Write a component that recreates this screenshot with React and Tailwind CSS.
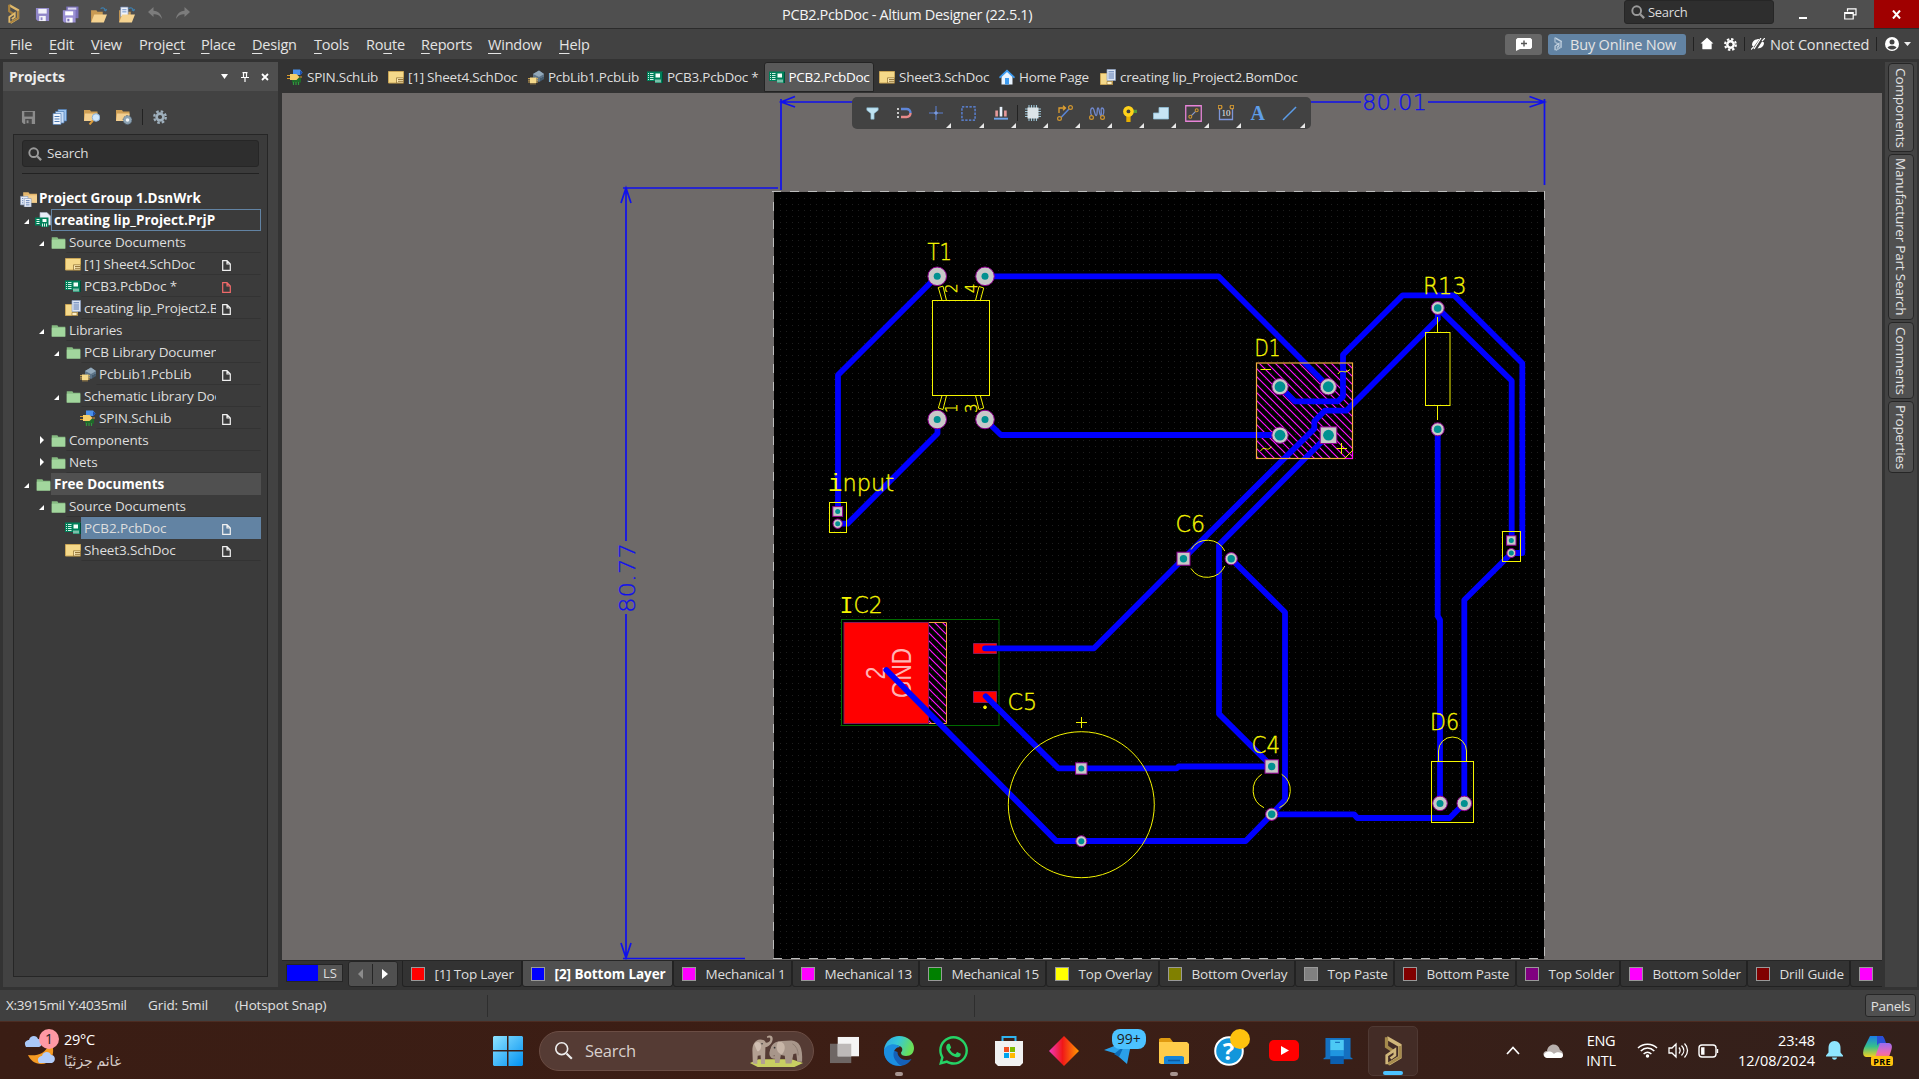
import React from "react";
import { RiHome2Fill } from "react-icons/ri";
import { FaWhatsapp } from "react-icons/fa";

const YELLOW = "#f4f400";

/* ---------- small icons ---------- */
const I = ({ s = 16, w, h, vb = 16, children, className = "" }) => (
  <svg width={w || s} height={h || s} viewBox={`0 0 ${vb} ${vb}`} className={`shrink-0 ${className}`} fill="none" preserveAspectRatio="none">
    {children}
  </svg>
);

const AltiumLogo = ({ w = 16, h = 24, a = "#e0b96a", b = "#a8813c" }) => (
  <svg width={w} height={h} viewBox="0 0 16 24" className="shrink-0" fill="none">
    <path d="M3 1.500 13.500 7.500v9.500L4.500 22.500" stroke={a} strokeWidth="2.800" />
    <path d="M2.800 1v7.500L8 12" stroke={b} strokeWidth="2.600" />
    <path d="M13.500 8v9L4 22.500" stroke={b} strokeWidth="2" />
    <path d="M3 22.500V15.500l6.500-4.500v4.500L6 18" stroke={a} strokeWidth="2.200" />
  </svg>
);

const Floppy = ({ c = "#8f86c8", l = "#f2f2fa", s = 15 }) => (
  <I s={s}>
    <path d="M1 1h14v14H3l-2-2z" fill={c} />
    <path d="M3.500 2h9v5h-9z" fill={l} />
    <path d="M4.500 9.500h7V15h-7z" fill={l} />
    <path d="M6 11h2v3H6z" fill={c} />
  </I>
);
const FloppyAll = () => (
  <I s={17}>
    <path d="M4 .5h11.500v11H4z" fill="#7a70b8" />
    <path d="M5.500 1.500h8v2h-8z" fill="#d8d4f0" />
    <path d="M.8 4h12v11.500H2L.8 14z" fill="#9a90d4" />
    <path d="M3 5h7.500v3.800H3z" fill="#fff" />
    <path d="M4 11h6v4.500H4z" fill="#fff" />
    <path d="M5 12h2v2.500H5z" fill="#7a70b8" />
  </I>
);
const OpenFolder = ({ doc }) => (
  <I s={17}>
    <path d="M1 4h5l1 1.500h5V15H1z" fill="#c99b54" />
    {doc && <path d="M2.500 1h7v9h-7z" fill="#eef2fa" stroke="#6d88b5" strokeWidth=".6" />}
    {doc && <path d="M4 3.500h4M4 5.500h4" stroke="#5b82c0" strokeWidth=".8" />}
    <path d="M4 8h12l-3 7.500H1z" fill="#f5d391" />
    <path d="M10 2.500c2-1.500 4-.5 4.500 1.500M13 3.500l1.700 1L16 3" stroke="#3d7fae" strokeWidth="1" />
  </I>
);
const Arrow = ({ flip }) => (
  <I s={16} className={flip ? "-scale-x-100" : ""}>
    <path d="M1 6 6.500 1v3.800c5 .3 8 3.700 8.500 8.200-2.300-3.800-4.500-4.800-8.500-4.800V11z" fill="#7c7c7c" />
  </I>
);
const Search = ({ s = 14, c = "#9a9a9a", sw = 2.2 }) => (
  <I s={s}>
    <circle cx="6.500" cy="6.500" r="5" stroke={c} strokeWidth={sw} />
    <path d="m10.500 10.500 4.500 4.500" stroke={c} strokeWidth={sw + 0.4} />
  </I>
);
const SchLib = () => (
  <I s={16}>
    <path d="M6 .5h7l2.500 3-2 2.500H6z" fill="#4a8fe8" />
    <path d="M13 1.500l2.500 2-2.500 3z" fill="#1c4fb0" />
    <path d="M5 9h9v4.500H5z" fill="#1f6a2a" />
    <path d="M6.500 13v3M9 13v3M11.500 13v3" stroke="#2e9a3c" strokeWidth="1.200" />
    <path d="M3 5h6.500l3 3-3 3H3z" fill="#f6cf6a" />
    <path d="M0 6.500h3M0 9.500h3M12.500 8h2.500" stroke="#d99a2b" strokeWidth="1.200" />
  </I>
);
const PcbLib = () => (
  <I s={16}>
    <path d="M5 5 11 1.500 16 5v5l-5 3-6-3z" fill="#5d7488" />
    <path d="M5 5l6-3.500L16 5l-5 3z" fill="#93a9ba" />
    <path d="M6 8v3M8 9v3M13 9v3M15 8v3" stroke="#2f4252" />
    <path d="M2 8.500h6.500v5.500H2z" fill="#f5d98a" />
    <path d="M0 9.500h2M0 11.200h2M0 13h2M8.500 9.500H10M8.500 11.200H10M8.500 13H10M3 14v1.500M5 14v1.500M7 14v1.500" stroke="#d8ad55" strokeWidth=".9" />
  </I>
);
const SchDoc = () => (
  <I s={16}>
    <path d="M.5 2.500h15v11.500H.5z" fill="#f5d98a" stroke="#c9a556" />
    <path d="M8.500 8.800h7v5.200h-7z" fill="#fbe9b4" stroke="#8a6a2c" strokeWidth=".7" />
    <path d="M10 10.500h5.500M10 12.300h5.500" stroke="#8a6a2c" strokeWidth=".9" />
  </I>
);
const PcbDoc = () => (
  <I s={16}>
    <path d="M0 2.500h16v11.500H8v-2H0z" fill="#00805a" />
    <path d="M1 4.500h1M3 4.500h3.500M1 6.500h1M3 6.500h3.500M1 8.500h1M3 8.500h3.500M1 10.500h1M3 10.500h3.500" stroke="#e9fff5" strokeWidth=".9" />
    <path d="M8.500 4.500h4.500V8.500H8.500z" fill="#f4fff9" />
    <path d="M9 10.500v3M11 10.500v3M13 10.500v3" stroke="#f4fff9" strokeWidth="1" />
    <path d="M15.500 3v11" stroke="#004c36" />
  </I>
);
const BomDoc = () => (
  <I s={16}>
    <path d="M.5 4.500h12V15.500H.5z" fill="#f5d98a" stroke="#c9a556" />
    <path d="M7 .5h8.500v11H7z" fill="#dde6f5" stroke="#8fa3c4" strokeWidth=".7" />
    <path d="M8.500 2.800H14M8.500 5H14M8.500 7H14M8.500 9H14" stroke="#4c6ea8" strokeWidth=".9" />
    <path d="M7 12.500h5v3H7z" fill="#fff0c4" stroke="#8a6a2c" strokeWidth=".6" />
  </I>
);
const HomeDoc = () => (
  <I s={16}>
    <path d="M2.500 7v8.500h11V7L8 1.500z" fill="#eaf4ff" />
    <path d="M0 8 8 .5 16 8l-1 1.500L8 3 1 9.500z" fill="#3d9bf0" />
    <path d="M6 9h4v6.500H6z" fill="#3d9bf0" />
  </I>
);
const Folder = () => (
  <I s={15}>
    <path d="M.8 2.500h6l1 1.500h7.400v10.500H.8z" fill="#86bb81" />
    <path d="M.8 5h14.400v9.500H.8z" fill="#a2d69d" />
  </I>
);
const GroupIcon = () => (
  <I s={17}>
    <path d="M3 2h5l1 1.500h7V12H3z" fill="#e3b56c" />
    <path d="M4 5h12v7H4z" fill="#f3cf90" />
    <path d="M.5 6h7v8h-7z" fill="#e4ebf7" stroke="#8798b8" strokeWidth=".6" />
    <path d="M4 8h6.500v8H4z" fill="#eef2fb" stroke="#8798b8" strokeWidth=".6" />
    <path d="M5.500 10h3.500M5.500 12h3.500M5.500 14h3.500M2 8h1M2 10h1M2 12h1" stroke="#4c6ea8" strokeWidth=".8" />
  </I>
);
const PrjIcon = () => (
  <I s={16}>
    <path d="M5 .5h7l3.500 3.500v9H5z" fill="#e8edf7" stroke="#a9b3c6" strokeWidth=".6" />
    <path d="M0 5.500h13.500v9.500H6v-1.500H0z" fill="#00805a" />
    <path d="M1.500 7.500h3M1.500 9.500h3M1.500 11.500h3" stroke="#e9fff5" />
    <path d="M7.500 7h4v3h-4z" fill="#f4fff9" />
    <path d="M7.500 11.500v3M9.500 11.500v3M11.500 11.500v3" stroke="#f4fff9" strokeWidth=".9" />
  </I>
);
const PageIcon = ({ c = "#f0f0f0" }) => (
  <svg width="9" height="11" viewBox="0 0 9 11" fill="none">
    <path d="M.7.700h4.300L8.300 4v6.300H.7zM5 .7V4h3.300" stroke={c} strokeWidth="1.200" />
  </svg>
);
const Gear = ({ c = "#9fb0bd", s = 14, hole = "#424242" }) => (
  <I s={s}>
    <circle cx="8" cy="8" r="6.600" stroke={c} strokeWidth="2.600" strokeDasharray="2.900 2.280" />
    <circle cx="8" cy="8" r="5.400" fill={c} />
    <circle cx="8" cy="8" r="2.400" fill={hole} />
  </I>
);

/* ---------- title bar and menu ---------- */
const QUICK = [<Floppy />, <FloppyAll />, <OpenFolder />, <OpenFolder doc />, <Arrow />, <Arrow flip />];

const TitleBar = () => (
  <header className="flex h-[29px] items-center border-b border-[#2b2b2b] bg-[#4f4f4f]">
    <div className="flex w-[782px] items-center pl-[5px]">
      <AltiumLogo w={17} h={20} />
      <div className="ml-[6px] flex items-center">
        {QUICK.map((ic, i) => <div key={i} className="flex w-[28.2px] justify-center">{ic}</div>)}
      </div>
    </div>
    <div className="w-[842px] whitespace-nowrap pt-[2px] text-[14.5px] tracking-[-0.34px] text-[#f4f4f4]">PCB2.PcbDoc - Altium Designer (22.5.1)</div>
    <div className="mb-[5px] flex h-[24px] w-[150px] items-center gap-[3px] rounded-[3px] border border-[#262626] bg-[#2e2e2e] pl-[6px] pt-px text-[13px] tracking-[-0.3px] text-[#dcdcdc]">
      <Search /> <span className="pt-px">Search</span>
    </div>
    <div className="flex flex-1 items-center self-stretch">
      <div className="ml-[25px] mt-[8px] h-[2px] w-[8px] bg-white" />
      <svg className="ml-[37px]" width="13" height="12" viewBox="0 0 13 12" fill="none" stroke="#fff" strokeWidth="1.200">
        <path d="M3.500 3.500V.8H12v6H9.500M.7 4.500h8.500v6.500H.7zM.7 5.500h8.500" />
      </svg>
      <div className="ml-auto flex h-[28px] w-[45px] items-center justify-center bg-[#a00000]">
        <svg width="9" height="9" viewBox="0 0 9 9"><path d="m1 .5 7 8m0-8-7 8" stroke="#fff" strokeWidth="2" /></svg>
      </div>
    </div>
  </header>
);

const MENU = [
  ["", "F", "ile", "w-[39px]"], ["", "E", "dit", "w-[42px]"], ["", "V", "iew", "w-[48px]"],
  ["Proje", "c", "t", "w-[62px]"], ["", "P", "lace", "w-[51px]"], ["", "D", "esign", "w-[62px]"],
  ["", "T", "ools", "w-[52px]"], ["Ro", "u", "te", "w-[55px]"], ["", "R", "eports", "w-[67px]"],
  ["", "W", "indow", "w-[71px]"], ["", "H", "elp", "w-[40px]"],
];
const Sep = ({ className = "" }) => <div className={`h-[14px] w-px bg-[#222] ${className}`} />;

const MenuBar = () => (
  <nav className="flex h-[30px] items-center bg-[#424242] pl-[10px] text-[14.5px] text-[#e4e4e4]">
    {MENU.map(([a, b, c, w]) => (
      <div key={a + b + c} className={`${w} whitespace-nowrap pt-[2px] tracking-[-0.2px]`}>
        {a}<span className="underline decoration-1 underline-offset-[3px]">{b}</span>{c}
      </div>
    ))}
    <div className="ml-auto flex w-[414px] items-center">
      <div className="flex h-[21px] w-[37px] items-center justify-center rounded-[3px] bg-[#676767]">
        <svg width="16" height="13" viewBox="0 0 16 13"><path d="M1.500 0h13l1.500 1.500v8L14.500 11H4L0 13V1.500z" fill="#fff" /><path d="M8 2.500v6M5 5.500h6" stroke="#555" strokeWidth="1.400" /></svg>
      </div>
      <div className="ml-[6px] flex h-[21px] w-[138px] items-center gap-[7px] whitespace-nowrap rounded-[3px] bg-[#6283a3] pl-[5px] tracking-[-0.17px]">
        <AltiumLogo w={10} h={14} a="#c3d2e0" b="#9fb5c9" /><span className="pt-px">Buy Online Now</span>
      </div>
      <Sep className="ml-[7px]" />
      <RiHome2Fill className="ml-[6px] text-white" size={14} />
      <div className="ml-[10px]"><Gear c="#fff" s={13} /></div>
      <Sep className="ml-[7px]" />
      <svg className="ml-[6px]" width="14" height="12" viewBox="0 0 14 12"><path d="M1 7.500C1 3 4 1 8.500 1L3 8.500zM13 4.500c0 4-2.500 5.500-6.500 6l4.500-7z" fill="#fff" /><path d="M0 11.500 3 8.500M11 3l3-3M3 11 10 0" stroke="#fff" strokeWidth="1.200" /></svg>
      <div className="ml-[5px] whitespace-nowrap pt-[2px] tracking-[-0.17px]">Not Connected</div>
      <Sep className="ml-auto" />
      <svg className="ml-[8px]" width="14" height="14" viewBox="0 0 14 14"><circle cx="7" cy="7" r="7" fill="#fff" /><circle cx="7" cy="5" r="2.500" fill="#424242" /><path d="M2.500 10.500C4 8 10 8 11.500 10.500 9 13.300 5 13.300 2.500 10.500z" fill="#424242" /></svg>
      <svg className="ml-[5px] mr-[8px]" width="7" height="4" viewBox="0 0 7 4"><path d="M0 0h7L3.500 4z" fill="#eee" /></svg>
    </div>
  </nav>
);

/* ---------- projects panel ---------- */
const TREE = [
  { lv: 0, icon: <GroupIcon />, t: "Project Group 1.DsnWrk", bold: true },
  { lv: 1, icon: <PrjIcon />, t: "creating lip_Project.PrjP", bold: true, open: 1, outline: true },
  { lv: 2, icon: <Folder />, t: "Source Documents", open: 1 },
  { lv: 3, icon: <SchDoc />, t: "[1] Sheet4.SchDoc", page: "#f0f0f0" },
  { lv: 3, icon: <PcbDoc />, t: "PCB3.PcbDoc *", page: "#f06a6a" },
  { lv: 3, icon: <BomDoc />, t: "creating lip_Project2.BomDoc", page: "#f0f0f0", tight: true },
  { lv: 2, icon: <Folder />, t: "Libraries", open: 1 },
  { lv: 3, icon: <Folder />, t: "PCB Library Documents", open: 1 },
  { lv: 4, icon: <PcbLib />, t: "PcbLib1.PcbLib", page: "#f0f0f0" },
  { lv: 3, icon: <Folder />, t: "Schematic Library Documents", open: 1 },
  { lv: 4, icon: <SchLib />, t: "SPIN.SchLib", page: "#f0f0f0" },
  { lv: 2, icon: <Folder />, t: "Components", open: 2 },
  { lv: 2, icon: <Folder />, t: "Nets", open: 2 },
  { lv: 1, icon: <Folder />, t: "Free Documents", bold: true, open: 1, grey: true },
  { lv: 2, icon: <Folder />, t: "Source Documents", open: 1 },
  { lv: 3, icon: <PcbDoc />, t: "PCB2.PcbDoc", page: "#f0f0f0", sel: true },
  { lv: 3, icon: <SchDoc />, t: "Sheet3.SchDoc", page: "#f0f0f0" },
];
const INDENT = ["w-[6px]", "w-[10px]", "w-[25px]", "w-[40px]", "w-[55px]"];

const TreeRow = ({ n }) => {
  let box = "border-transparent border-b-[#333]";
  if (n.lv === 0) box = "border-transparent";
  if (n.outline) box = "border-[#6283a3]";
  if (n.grey) box = "border-[#505050] bg-[#505050]";
  if (n.sel) box = "border-[#6283a3] bg-[#6283a3]";
  let font = n.tight ? "tracking-[-0.22px]" : "tracking-[-0.14px]";
  if (n.bold) font = "text-[13.5px] font-bold tracking-[0.03px] text-white";
  return (
    <div className="flex h-[22px] items-center pr-[6px]">
      <div className={`${INDENT[n.lv]} shrink-0`} />
      {n.lv > 0 && (
        <div className="flex w-[11px] shrink-0 items-center">
          {n.open === 1 && <svg width="5" height="5" viewBox="0 0 5 5" className="mt-[3px]"><path d="M5 0v5H0z" fill="#fff" /></svg>}
          {n.open === 2 && <svg width="4" height="8" viewBox="0 0 4 8" className="ml-px"><path d="M0 0l4 4-4 4z" fill="#fff" /></svg>}
        </div>
      )}
      <div className="flex w-[16px] shrink-0 items-center justify-center">{n.icon}</div>
      <div className={`flex h-[22px] min-w-0 flex-1 items-center border pl-[2px] ${box}`}>
        <div className={`min-w-0 flex-1 overflow-hidden whitespace-nowrap pt-px ${font}`}>{n.t}</div>
        <div className="ml-[6px] flex w-[38px] shrink-0 pt-[2px]">{n.page && <PageIcon c={n.page} />}</div>
      </div>
    </div>
  );
};

const ProjectsPanel = () => (
  <aside className="flex w-[275px] flex-col bg-[#424242]">
    <div className="flex h-[29px] items-center bg-[#4f4f4f] pl-[6px] text-[14px] font-bold tracking-[-0.1px] text-[#eee]">
      Projects
      <div className="ml-auto flex items-center gap-[12.500px] pr-[9px]">
        <svg width="7" height="5" viewBox="0 0 7 5"><path d="M0 0h7L3.500 5z" fill="#fff" /></svg>
        <svg width="8" height="10" viewBox="0 0 8 10"><path d="M1.500.600h5M2.500 0v5M5.500 0v5M0 5.500h8M4 5.500V10" stroke="#fff" strokeWidth="1.200" /></svg>
        <svg width="8" height="8" viewBox="0 0 8 8"><path d="m1 1 6 6m0-6L1 7" stroke="#fff" strokeWidth="1.800" /></svg>
      </div>
    </div>
    <div className="flex h-[43px] items-center pl-[18px] pt-[9px]">
      <Floppy c="#8c8c8c" l="#4a4a4a" s={15} />
      <I s={16} className="ml-[16px]">
        <path d="M6 .5h8.500V12H6z" fill="#9cc3ee" stroke="#4d7cb5" strokeWidth=".7" />
        <path d="M3.500 2.500H12V14H3.500z" fill="#c6dcf6" stroke="#4d7cb5" strokeWidth=".7" />
        <path d="M1 4.500h8V15.500H1z" fill="#f1f6fd" stroke="#4d7cb5" strokeWidth=".7" />
        <path d="M2.500 7.500h5M2.500 10h5M2.500 12.500h5" stroke="#4d7cb5" />
      </I>
      <I s={16} className="ml-[16px]">
        <path d="M0 1h6l1 1.500h6.500V12H0z" fill="#cf9f55" /><path d="M1 4.500h12.500V12H0z" fill="#f3cf90" />
        <circle cx="12" cy="8.500" r="3.800" fill="#cfe6fb" stroke="#8ab0d8" /><path d="m9 11.500-3.500 4" stroke="#d99a3a" strokeWidth="2" />
      </I>
      <I s={16} className="ml-[16px]">
        <path d="M0 1h6l1 1.500h6.500V12H0z" fill="#cf9f55" /><path d="M1 4.500h12.500V12H0z" fill="#f3cf90" />
        <circle cx="11.500" cy="11" r="4.400" fill="#8da3b3" stroke="#56697a" strokeDasharray="1.500 1.200" /><circle cx="11.500" cy="11" r="1.800" fill="#f0f4f7" />
      </I>
      <Sep className="mx-[10px] h-[16px]" />
      <Gear />
    </div>
    <div className="mx-[10px] mb-[10px] flex flex-1 flex-col border border-[#262626] bg-[#3b3b3b]">
      <div className="mx-[8px] mt-[5px] flex h-[27px] items-center gap-[5px] rounded-[3px] border border-[#262626] bg-[#2e2e2e] pl-[5px] text-[13.500px] tracking-[-0.25px] text-[#dcdcdc]">
        <Search /> Search
      </div>
      <div className="mx-[8px] mt-[6px] h-px bg-[#222]" />
      <div className="mt-[13px] text-[13.5px] text-[#dedede]">
        {TREE.map((n, i) => <TreeRow key={i} n={n} />)}
      </div>
    </div>
  </aside>
);

/* ---------- document tabs ---------- */
const TABS = [
  [<SchLib />, "SPIN.SchLib", "w-[101px]"], [<SchDoc />, "[1] Sheet4.SchDoc", "w-[140px]"], [<PcbLib />, "PcbLib1.PcbLib", "w-[119px]"],
  [<PcbDoc />, "PCB3.PcbDoc *", "w-[121.5px]"], [<PcbDoc />, "PCB2.PcbDoc", "w-[110.5px]", true], [<SchDoc />, "Sheet3.SchDoc", "w-[120px]"],
  [<HomeDoc />, "Home Page", "w-[101px]"], [<BomDoc />, "creating lip_Project2.BomDoc", "w-[205px]"],
];
const DocTabs = () => (
  <div className="flex h-[34px] items-end bg-[#333] pb-px">
    {TABS.map(([ic, t, w, on], i) => (
      <div key={i} className={`${w} flex h-[30px] items-center gap-[4px] whitespace-nowrap rounded-t-[3px] border pl-[4px] text-[13.5px] tracking-[-0.25px] ${on ? "border-[#242424] bg-[#595959] text-white" : "border-transparent text-[#dedede]"}`}>
        {ic}{t}
      </div>
    ))}
  </div>
);

/* ---------- floating tool bar ---------- */
const Node2 = ({ x, y }) => <circle cx={x} cy={y} r="1.900" stroke="#cf9530" strokeWidth="1.200" />;
const TOOLS = [
  [<I s={13}><path d="M1 1h14v3L10 8v7H6V8L1 4z" fill="#bfe3f2" stroke="#7fb3cc" strokeWidth=".7" /></I>, 0],
  [<I s={16}><path d="M2 3v11" stroke="#d8d8d8" strokeWidth="1.800" strokeDasharray="2 2" /><path d="M5 4h5.500c2.500 0 4 1.500 4 4" stroke="#5f86d8" strokeWidth="2.400" /><path d="M5 12h5.500c2.500 0 4-1.500 4-4" stroke="#e88a8a" strokeWidth="2.400" /></I>, 0],
  [<I s={14}><path d="M8 0v16M0 8h16" stroke="#5a7fd0" strokeWidth="1.200" /><path d="M6 8h4M8 6v4" stroke="#7f9fe2" strokeWidth="1.600" /></I>, 1],
  [<I s={15}><path d="M1 1h14v14H1z" stroke="#5f8ef0" strokeWidth="1.300" strokeDasharray="2.500 1.500" /></I>, 1],
  [<I s={14}><path d="M1.500 5h3v7h-3zM11.500 5h3v7h-3z" fill="#e79a9a" /><path d="M6.500 1h3v11h-3z" fill="#e8f0fa" /><path d="M0 14.500h16" stroke="#6ea2e8" strokeWidth="2.200" /></I>, 1],
  [<I s={16}><path d="M4 0v16M6.500 0v16M9 0v16M11.500 0v16M0 4h16M0 6.500h16M0 9h16M0 11.500h16" stroke="#9cc4d6" strokeWidth="1.100" /><path d="M2.500 2.500h11v11h-11z" fill="#dce4e8" /></I>, 1],
  [<I s={16}><path d="M2 8V3h6M6 .8 8.500 3 6 5.200" stroke="#e0a030" strokeWidth="1.300" /><path d="M4 12.500 12 4" stroke="#5a86d8" strokeWidth="1.500" /><Node2 x="13.500" y="2.500" /><Node2 x="2.500" y="13.500" /></I>, 1],
  [<I s={16}><path d="M2.500 10.500C1 7 1.500 3 3.500 3S5.500 10.500 7.200 10.500 7.500 3 9 3s1.300 7.500 2.800 7.500S11 3 13 3s2.500 4 .8 7.500" stroke="#7088cc" strokeWidth="1.300" /><Node2 x="2.500" y="12.500" /><Node2 x="13.500" y="12.500" /></I>, 1],
  [<I s={17}><path d="M9 6h6" stroke="#4f9a3c" strokeWidth="3" /><path d="M5 8h4v8H5z" fill="#e8b000" /><circle cx="7" cy="6" r="5" fill="#ffd21a" /><circle cx="7" cy="6" r="1.800" fill="#3f3f3f" /></I>, 1],
  [<I s={16}><path d="M6 2.500h9.500v11.500H.5V8H6z" fill="#c6e4f4" stroke="#8fbfd8" strokeWidth=".8" /></I>, 1],
  [<I s={17}><path d="M.7.700h14.600v14.600H.7z" stroke="#e884d8" strokeWidth="1.200" /><path d="m6 10 4-4" stroke="#8a9ac8" strokeWidth="1.200" /><circle cx="11" cy="5" r="1.400" stroke="#cf9530" /><circle cx="5" cy="11" r="1.400" stroke="#cf9530" /></I>, 1],
  [<div className="relative"><I s={16}><path d="M1.500 3v11.500h13V3" stroke="#7d95d8" strokeWidth="1.300" /><Node2 x="2" y="2" /><Node2 x="14" y="2" /></I><span className="absolute left-[4px] top-[3px] font-['Liberation_Serif'] text-[9px] leading-[10px] text-[#eee]">10</span></div>, 1],
  [<span className="font-['Liberation_Serif'] text-[20px] font-bold leading-none text-[#5f9ee8]">A</span>, 0],
  [<I s={15}><path d="M1 15 15 1" stroke="#5b9ce8" strokeWidth="1.600" /></I>, 1],
];
const ToolBar = () => (
  <div className="absolute left-[570px] top-[4px] flex h-[32px] w-[459px] rounded-[5px] bg-[#424242] pl-[4px]">
    {TOOLS.map(([ic, corner], i) => (
      <div key={i} className={`relative flex w-[32.15px] shrink-0 items-center justify-center ${i === 5 ? "before:absolute before:left-0 before:h-[16px] before:w-px before:bg-[#222]" : ""}`}>
        {ic}
        {corner === 1 && <svg className="absolute bottom-[1px] right-[1px]" width="5" height="5" viewBox="0 0 5 5"><path d="M5 0v5H0z" fill="#e8e8e8" /></svg>}
      </div>
    ))}
  </div>
);

/* ---------- board ---------- */
const TRACES = [
  "838,511 838,375 937,276.300", "837.7,523.7 847.5,523.7 937.5,433.5 937.5,419.500",
  "985,276.3 1218.5,276.3 1328.5,386.700", "985,419.5 1001,435 1280,435",
  "1280,386.7 1294.7,401.3 1337.7,401.3 1343,396.5 1343,354.7 1402.7,295.3 1454,295.3 1522.3,363.3 1522.3,553 1511.7,553",
  "1437.7,308 1437.7,319 1346.3,410.7 1324.7,410.7 1314.3,421.3 1314.3,428.7 1183.3,558.7 1094,648.3 985,648.300",
  "1437.7,308 1511.7,380.7 1511.7,540.300", "1437.7,429.3 1437.7,616 1440,620 1440,803.300",
  "1511.7,553 1464.3,600 1464.3,803.3 1449.7,818 1357.3,818 1354,814.3 1271.7,814.300",
  "1328.3,435 1219,544.7 1219,714 1271.7,766.300", "1231,558.7 1285,612.3 1285,800 1271.7,814.300",
  "985.7,696.3 1058.3,768.3 1176.7,768.3 1178.7,766.5 1271.7,766.500",
  "886.3,670 1056.3,841 1245.7,841 1271.7,814.300",
];
/* x, y, radius, hole radius, square */
const PADS = [
  [937.2, 276.3, 9.8, 3.5], [985, 276.3, 9.8, 3.5], [937.2, 419.5, 9.8, 3.5], [985, 419.5, 9.8, 3.5],
  [1280, 386.7, 8.7, 5.4], [1328.3, 386.7, 8.7, 5.4], [1280, 435.2, 8.7, 5.4], [1328.5, 435.2, 8.8, 5.4, 1],
  [1437.7, 308, 7, 3.8], [1437.7, 429.3, 7, 3.8],
  [1183.5, 558.7, 7, 3.7, 1], [1231.2, 558.7, 6.6, 3.7],
  [837.7, 511.5, 5.4, 2.5, 1], [837.7, 523.7, 5.2, 2.5],
  [1511.3, 540.5, 5.2, 2.5, 1], [1511.3, 553, 5, 2.5],
  [1081.3, 768.5, 6.2, 3, 1], [1081.3, 841.2, 6, 3],
  [1271.7, 766.5, 7.2, 3.7, 1], [1271.7, 814.3, 6.6, 3.7],
  [1440, 803.4, 7.8, 3.5], [1464.3, 803.4, 7.8, 3.5],
];
/* text, x, baseline, advance of the whole word */
const LABELS = [
  ["T1", 927.5, 259.5, 24.5], ["input", 828, 491, 66], ["D1", 1254.5, 356, 26], ["R13", 1423, 294, 43.5], ["C6", 1175.5, 532, 29.5],
  ["IC2", 839.5, 613, 43], ["C5", 1007.5, 709.7, 29.5], ["C4", 1251.5, 752.7, 28.5], ["D6", 1430, 730, 29],
];
const SMALL = [["2", 957, 293], ["4", 977, 293], ["1", 957, 413], ["3", 977, 413]];

const gridPath = () => {
  let d = "";
  for (let y = 197.5; y < 957; y += 6.063)
    for (let x = 779.5; x < 1543; x += 6.063) d += `M${Math.round(x)} ${Math.round(y)}.5h1`;
  return d;
};
const GRID = gridPath();

const Board = () => (
  <svg className="block" width="1600" height="867" viewBox="282 93 1600 867" fill="none">
    <defs>
      <pattern id="hatch" width="8" height="8" patternUnits="userSpaceOnUse">
        <path d="M-1-1 9 9M-1 7l2 2M7-1l2 2" stroke="#ff10ff" strokeWidth="1.150" />
      </pattern>
    </defs>
    <rect x="774" y="192" width="770" height="767" fill="#000" />
    <path d={GRID} stroke="#1e1e1e" strokeWidth="1" shapeRendering="crispEdges" />
    <g stroke="#bdbdbd" strokeDasharray="9 9">
      <path d="M773.500 193.500V959" strokeDashoffset="9.500" />
      <path d="M772 191.500H1544" />
      <path d="M1544.500 191V959" />
      <path d="M773 958.500H1544" />
    </g>

    <g stroke="#1010ee" strokeWidth="1.700">
      <path d="M781 99V190M1544.500 99V185M781 102H1361M1428 102H1544M795 96.500 781 102l14 5M1529.500 96.500l15 5.500-15 5" />
      <path d="M623 188H778M626 188V541M626 614V959M621 203l5-15 5 15M621 943l5 15 5-15M623 958.500H745" />
    </g>
    <g fill="#1010ee" stroke="#1010ee" strokeWidth=".3" fontFamily="'DejaVu Sans'" fontWeight="200" fontSize="21">
      <text x="1362" y="109.500" textLength="65" lengthAdjust="spacingAndGlyphs">80.01</text>
      <text transform="translate(635 613) rotate(-90)" textLength="70" lengthAdjust="spacingAndGlyphs">80.77</text>
    </g>

    <rect x="841.500" y="619.500" width="157.500" height="106" stroke="#006a00" />
    <rect x="844" y="622.500" width="84.500" height="101" fill="#f00" stroke="#8a1a5a" />
    <rect x="929" y="622.500" width="17.500" height="101" fill="url(#hatch)" />
    <path d="M929 622.500H946.500V723.500H929" stroke="#f0a23c" />
    <path d="M973.500 643.500h23v10h-23zM973.500 691.500h23v11h-23z" fill="#f00" stroke="#8a1a5a" />
    <g fill="#ffb4b4" fontFamily="'Liberation Sans'" fontSize="27">
      <text transform="translate(910.500 698) rotate(-90)" textLength="50" lengthAdjust="spacingAndGlyphs">GND</text>
      <text transform="translate(884.500 679.500) rotate(-90)" textLength="13" lengthAdjust="spacingAndGlyphs">2</text>
    </g>
    <rect x="1256.500" y="363.500" width="96" height="95" fill="url(#hatch)" />

    <g stroke="#00f" strokeWidth="5.800" strokeLinejoin="round" strokeLinecap="round">
      {TRACES.map((p) => <polyline key={p} points={p} />)}
    </g>

    <rect x="1256.500" y="363" width="96" height="95.500" stroke="#f2ae3c" strokeWidth="1.200" />
    <path d="M1352.500 450v8.500H1344" stroke="#f0f" />

    {PADS.map(([x, y, r, h, sq], i) => (
      <g key={i}>
        {sq
          ? <rect x={x - r + 0.5} y={y - r + 0.5} width={2 * r - 1} height={2 * r - 1} fill="#c8c8c8" stroke="#900090" strokeWidth="1" />
          : <circle cx={x} cy={y} r={r - 0.5} fill="#c8c8c8" stroke="#900090" strokeWidth="1" />}
        <circle cx={x} cy={y} r={h} fill="#009090" />
      </g>
    ))}

    <g stroke={YELLOW} strokeWidth="1">
      <rect x="932.500" y="300.500" width="57" height="95" />
      <path d="M942 300.500l-3.700-13 4.700-1.300 3.500 14.300M975.500 300.500l3.500-14 4.700 1.500-3.400 12.500M942 395.500l-3.600 12.500 4.600 1.500 3.500-14M975.500 395.500l3.500 14 4.700-1.500-3.400-12.500" />
      <rect x="829.500" y="502.500" width="17" height="30" />
      <rect x="1502.500" y="531.500" width="18" height="30" />
      <rect x="1425.500" y="332.500" width="24.500" height="73" />
      <path d="M1437.500 317v15M1437.500 405v15" />
      <path d="M1191 549.500a19.300 19.300 0 0 1 33.800 1.500M1191 568.500a19.300 19.300 0 0 0 33.800-2.500" />
      <path d="M1261.700 774.300a19.300 19.300 0 0 0 2.300 33.400M1281.700 774.300a19.300 19.300 0 0 1-2.300 33.400" />
      <circle cx="1081.300" cy="804.700" r="73" />
      <path d="M1076 722.500h11M1081.500 717v11M1336.500 448.500h10.500M1341.500 443v11M1260.500 369.500h10.500M1344 459l9-9" />
      <path d="M1338 374c3-5 6-1 9-2.500l3-2M1260.500 451c3-5 6-1 8-2l3-2" />
      <rect x="1431.500" y="761.500" width="42" height="61" />
      <path d="M1438.500 761V751a14 14 0 0 1 28 0v10" />
      <circle cx="985" cy="707.300" r="1.400" fill={YELLOW} />
    </g>
    <g fill={YELLOW} stroke={YELLOW} strokeWidth=".35" fontFamily="'DejaVu Sans'" fontWeight="200">
      {LABELS.map(([t, x, y, w]) => (
        <text key={t} x={x} y={y} fontSize="22.500" textLength={w} lengthAdjust="spacingAndGlyphs">
          {/^[Ii]/.test(t) ? <><tspan fontFamily="'Liberation Mono'" fontWeight="400" strokeWidth="0" fontSize="24">{t[0]}</tspan>{t.slice(1)}</> : t}
        </text>
      ))}
      {SMALL.map(([t, x, y]) => (
        <text key={t} fontSize="15" transform={`translate(${x} ${y}) rotate(-90)`}>{t}</text>
      ))}
    </g>
  </svg>
);

/* ---------- layer strip ---------- */
const LAYERS = [
  ["[1] Top Layer", "bg-[#ff0000]", "w-[120px]"], ["[2] Bottom Layer", "bg-[#0000ff]", "w-[151px]", true], ["Mechanical 1", "bg-[#ff00ff]", "w-[119px]"],
  ["Mechanical 13", "bg-[#ff00ff]", "w-[127px]"], ["Mechanical 15", "bg-[#008000]", "w-[127px]"], ["Top Overlay", "bg-[#ffff00]", "w-[113px]"],
  ["Bottom Overlay", "bg-[#808000]", "w-[136px]"], ["Top Paste", "bg-[#808080]", "w-[99px]"], ["Bottom Paste", "bg-[#800000]", "w-[122px]"],
  ["Top Solder", "bg-[#800080]", "w-[104px]"], ["Bottom Solder", "bg-[#ff00ff]", "w-[127px]"], ["Drill Guide", "bg-[#800000]", "w-[103px]"], ["", "bg-[#ff00ff]", "w-[40px]"],
];
const LayerStrip = () => (
  <div className="flex h-[27px] overflow-hidden border-t border-[#262626] bg-[#333] text-[13.5px] text-[#dedede]">
    <div className="ml-[4px] mt-[3px] flex h-[18px] w-[57px] shrink-0 border border-[#262626]">
      <div className="w-[31px] bg-[#0000ff]" />
      <div className="flex-1 bg-[#555] pl-[5px] text-[13px] leading-[17px]">LS</div>
    </div>
    <div className="ml-[5px] mr-[4px] flex h-[26px] w-[50px] shrink-0 items-center rounded-[3px] border border-[#262626] bg-[#505050]">
      <svg className="mx-auto" width="5" height="10" viewBox="0 0 5 10"><path d="M5 0v10L0 5z" fill="#8c8c8c" /></svg>
      <div className="h-[20px] w-px bg-[#262626]" />
      <svg className="mx-auto" width="6" height="10" viewBox="0 0 6 10"><path d="M0 0v10l6-5z" fill="#fff" /></svg>
    </div>
    {LAYERS.map(([t, c, w, on], i) => (
      <div key={i} className={`${w} flex h-[26px] shrink-0 items-center gap-[10px] whitespace-nowrap rounded-b-[3px] border border-t-0 border-[#222] pl-[7.5px] ${on ? "bg-[#505050] text-[13.5px] font-bold tracking-[-0.05px] text-white" : "tracking-[-0.19px]"}`}>
        <div className={`h-[14px] w-[14px] shrink-0 border border-[#999] ${c}`} /><span className="pt-[2px]">{t}</span>
      </div>
    ))}
  </div>
);

const SideTabs = () => (
  <div className="mr-[2px] flex w-[32px] flex-col items-center gap-[2px] bg-[#424242] pt-px text-[13.500px] tracking-[-0.1px] text-[#e4e4e4]">
    {[["Components", "h-[89px]"], ["Manufacturer Part Search", "h-[166px] tracking-[-0.2px]"], ["Comments", "h-[77px]"], ["Properties", "h-[72px]"]].map(([t, h]) => (
      <div key={t} className={`${h} flex w-[26px] items-center justify-center whitespace-nowrap rounded-[4px] border border-[#262626] bg-[#505050] [writing-mode:vertical-rl]`}>{t}</div>
    ))}
  </div>
);

const StatusBar = () => (
  <div className="mt-[3px] flex h-[31px] items-center bg-[#404040] pl-[6px] text-[13.500px] tracking-[-0.3px] text-[#e0e0e0]">
    <div className="w-[142px]">X:3915mil Y:4035mil</div>
    <div className="w-[87px] tracking-[-0.1px]">Grid: 5mil</div>
    <div className="w-[252px] tracking-[-0.15px]">(Hotspot Snap)</div>
    <div className="h-[22px] w-px bg-[#2e2e2e]" />
    <div className="ml-[486px] h-[22px] w-px bg-[#2e2e2e]" />
    <div className="ml-auto mr-[3px] flex h-[23px] w-[51px] items-center justify-center rounded-[3px] border border-[#262626] bg-[#505050] pt-px">Panels</div>
  </div>
);

/* ---------- desktop task bar ---------- */
const Elephant = () => (
  <svg width="56" height="33" viewBox="0 0 58 34">
    <path d="M1 29 10 25h34l12 4-9 4H9z" fill="#c9cf62" />
    <path d="M4 29.500 3.500 16c0-7 3-11 8-11.500 3 0 5 1 6 3.500 3 0 5-2 4.500-4.500-.5-1.500-2-1-3-.5l-.5-1.500c3-2 6.500-1 6 3C24 9 20 12 17 12.500L16.500 30h-4l-.5-9-3 .5-.5 8.500z" fill="#b3a092" />
    <path d="M5.500 9.500c2-4 7-3 7 2 0 3-2 6-4 5z" fill="#d0bfb2" />
    <path d="M22 17c0-7 5-11 12-11l10-.5c8 .5 12 7 11 22h-5l-1-8.500-3 .5-2 10h-6l-1-8-4-1-1.500 8.500H27l-.5-8c-2.500 1.500-4 0-4.500-4z" fill="#a8968a" />
    <path d="M30 7c8-1 9 8 4 13-5-1-7-7-4-13z" fill="#c8b6a8" /><path d="M23.500 15c-2.500 5-.5 9 3.500 8" stroke="#a8968a" strokeWidth="2.500" fill="none" />
    <circle cx="26.500" cy="13" r=".9" fill="#333" /><circle cx="13.500" cy="9" r=".8" fill="#333" /><path d="M45 9c4 2 6 7 6 12" stroke="#8d7c71" fill="none" />
  </svg>
);
const Cell = ({ children, dot, active }) => (
  <div className={`relative flex h-[50px] w-[50px] items-center justify-center ${active ? "rounded-[5px] border border-[#4f3933] bg-[#432c26]" : ""}`}>
    {children}
    {dot && <div className="absolute bottom-0 h-[4px] w-[8px] rounded-full bg-[#a89590]" />}
    {active && <div className="absolute bottom-0 h-[4px] w-[20px] rounded-full bg-[#4cc2ff]" />}
  </div>
);

const TaskBar = () => (
  <footer className="flex h-[58px] items-center border-t border-[#4c2c22] bg-gradient-to-r from-[#3a1d14] via-[#3d1e15] to-[#33201b] text-white">
    <div className="flex w-[492px] items-center pl-[24px]">
      <svg width="36" height="40" viewBox="0 0 36 40" className="mb-[5px]">
        <path d="M4 27c8 1 17 0 21-11l4 4c1 8-3 16-12 16C11 36 6 32 4 27z" fill="#f59a23" />
        <path d="M2 19c-3-5 1-7 3-7 1-5 8-5 9-1 5 0 5 7 1 8z" fill="#a9c8f8" />
        <path d="M15 35c-3-5 1-7 3-7 1-5 8-5 9-1 5 0 5 7 1 8z" fill="#b3cdfa" />
        <circle cx="25" cy="11" r="10" fill="#ff99a4" />
        <text x="25" y="16" fontSize="14" textAnchor="middle" fill="#222">1</text>
      </svg>
      <div className="ml-[4px] pb-[2px] leading-[21px]">
        <div className="text-[14.5px] tracking-[-0.3px]">29°C</div>
        <div dir="rtl" className="font-['Noto_Sans','DejaVu_Sans',sans-serif] text-[14px] text-[#d6ccc9]">غائم جزئيًا</div>
      </div>
    </div>
    <svg width="30" height="30" viewBox="0 0 30 30" className="ml-px">
      <defs><linearGradient id="win" x1="0" y1="0" x2="1" y2="1"><stop stopColor="#8fe3ff" /><stop offset="1" stopColor="#0091f2" /></linearGradient></defs>
      <path d="M1 0h13v14H0V1zM15.500 0H29l1 1v13H15.500zM0 15.500h14V30H1l-1-1zM15.500 15.500H30V29l-1 1H15.500z" fill="url(#win)" />
    </svg>
    <div className="ml-[16px] flex h-[40px] w-[275px] items-center rounded-full border border-[#6b4d44] bg-[#553b34] pl-[14px] text-[16.500px] tracking-[-0.25px] text-[#d8d0cd]">
      <Search s={19} c="#eee" sw={1.4} />
      <span className="ml-[12px] pt-px">Search</span>
      <div className="ml-auto mr-[8px] pt-[2px]"><Elephant /></div>
    </div>
    <div className="ml-[5px] flex gap-[4.95px]">
      <Cell><svg width="31" height="29" viewBox="0 0 32 30"><path d="M1 8h22v20H1z" fill="#6e6664" /><path d="M9 1h22v20H9z" fill="#f4f4f4" /><path d="M9 8h14v13H9z" fill="#bdb9b8" /></svg></Cell>
      <Cell dot>
        <svg width="30" height="30" viewBox="0 0 30 30">
          <defs><linearGradient id="ed" x1="0" y1="0" x2="1" y2=".3"><stop stopColor="#2fa5e8" /><stop offset=".5" stopColor="#36c8d8" /><stop offset="1" stopColor="#6adf58" /></linearGradient></defs>
          <path d="M1 11c-3 10 4 19 14 19 5 0 10-2.500 12.500-7-7 3-14-1-14-7z" fill="#1560b8" />
          <path d="M0 14C1 5 8 0 15 0c9 0 15 6 15 12 0 5-3 8-8 8-3 0-5-1-5-3 0-1 2-2 1-5C16 8 4 8 0 14z" fill="url(#ed)" />
          <path d="M0 14c2-6 12-8 16-3-6 0-9 8-4 14 2 3 4 4.500 6 4.700C8 31-1 24 0 14z" fill="#1b8ee0" />
        </svg>
      </Cell>
      <Cell><FaWhatsapp size={33} color="#25d366" /></Cell>
      <Cell>
        <svg width="30" height="30" viewBox="0 0 30 30"><path d="M8.500 6V1h13v5" stroke="#2fb4f0" strokeWidth="2" fill="none" /><path d="M1 5h28v22l-3 3H4l-3-3z" fill="#f1f1f1" /><path d="M10 11h5v5h-5z" fill="#f25022" /><path d="M16 11h5v5h-5z" fill="#7fba00" /><path d="M10 17h5v5h-5z" fill="#00a4ef" /><path d="M16 17h5v5h-5z" fill="#ffb900" /></svg>
      </Cell>
      <Cell>
        <svg width="30" height="30" viewBox="0 0 30 30"><defs><linearGradient id="dm"><stop stopColor="#f038c0" /><stop offset=".45" stopColor="#f01818" /><stop offset="1" stopColor="#ff9a00" /></linearGradient></defs><path d="M15 0 30 15 15 30 0 15z" fill="url(#dm)" /></svg>
      </Cell>
      <Cell>
        <svg width="30" height="30" viewBox="0 0 30 30"><path d="M0 14 28 3 23 28l-8-7-2-3-3-1z" fill="#2aa0e8" /><path d="m10 18 10-8-5 11z" fill="#0c6cb8" /></svg>
        <div className="absolute left-[18px] top-[3px] flex h-[20px] w-[34px] items-center justify-center rounded-[8px] bg-[#4cc2ff] text-[14px] text-[#1c1c1c]">99+</div>
      </Cell>
      <Cell dot>
        <svg width="30" height="28" viewBox="0 0 30 28"><path d="M0 2 2 1h9l3 4H0z" fill="#e09a10" /><path d="M0 5h28l2 2v19l-2 1H2l-2-1z" fill="#ffcc4a" /><path d="M5 27v-7l2-1h16l2 1v7z" fill="#1684d8" /><path d="M9 23.500h12" stroke="#0b5aa0" strokeWidth="1.500" /></svg>
      </Cell>
      <Cell>
        <svg width="30" height="30" viewBox="0 0 30 30"><circle cx="15" cy="15" r="13.800" fill="#1296db" stroke="#fff" strokeWidth="2" /></svg>
        <span className="absolute text-[24px] font-bold text-white">?</span>
        <div className="absolute left-[26px] top-[3px] h-[20px] w-[20px] rounded-full bg-[#ffc20e]" />
      </Cell>
      <Cell><svg width="30" height="21" viewBox="0 0 30 21"><rect width="30" height="21" rx="5" fill="#f00" /><path d="m12 6 8 4.500L12 15z" fill="#fff" /></svg></Cell>
      <Cell><svg width="30" height="27" viewBox="0 0 30 28"><path d="M2 1h26v20l2 1v1H0v-1l2-1z" fill="#1470c0" /><path d="M7 3h14v11H7z" fill="#4cc9f5" /><path d="M7 14h14v6H7z" fill="#1f96e0" /><path d="M7 20h14v8H7z" fill="#0b5fb0" /><path d="M12 5.500h5" stroke="#0b5fb0" /></svg></Cell>
      <Cell active><AltiumLogo w={22} h={30} a="#d0b67a" b="#a58a4c" /></Cell>
    </div>
    <div className="ml-auto flex w-[413px] items-center text-[14.5px] leading-[24px] tracking-[-0.3px]">
      <svg width="14" height="9" viewBox="0 0 14 9"><path d="m1 8 6-6.500L13 8" stroke="#fff" strokeWidth="1.700" fill="none" /></svg>
      <svg className="ml-[23px]" width="20" height="14" viewBox="0 0 20 14"><path d="M5 14c-6 0-6-7-1-7 1-8 11-9 13-1 4 1 4 8 0 8z" fill="#b8b0ad" /><path d="M4 14c-4-1-4-5 0-6 4-1 5 0 7 2 2-3 9-2 9 1 0 2-1 3-3 3z" fill="#fff" /></svg>
      <div className="ml-[22px] w-[32px] whitespace-nowrap text-center leading-[20px]">ENG<br />INTL</div>
      <svg className="ml-[20px]" width="21" height="15" viewBox="0 0 21 15" fill="none" stroke="#fff" strokeWidth="1.500"><path d="M1 5c5-5 14-5 19 0M3.800 8c4-4 9.500-4 13.500 0M6.600 11c2.500-2.300 5.300-2.300 7.800 0" /><circle cx="10.500" cy="13" r="1" fill="#fff" /></svg>
      <svg className="ml-[10px]" width="21" height="17" viewBox="0 0 21 17" fill="none" stroke="#fff" strokeWidth="1.300"><path d="M1 6h3l4-4v13l-4-4H1zM11 5.500c1.500 2 1.500 4 0 6M13.500 3.500c3 3 3 7 0 10M16.500 1.500c4 4 4 10 0 14" /></svg>
      <svg className="ml-[9px]" width="21" height="14" viewBox="0 0 21 14" fill="none" stroke="#fff" strokeWidth="1.400"><rect x="1" y="1" width="17" height="12" rx="3" /><path d="M3.800 4v6h2V4zM19.500 5v4" fill="#fff" /></svg>
      <div className="ml-[13px] w-[83px] whitespace-nowrap text-right leading-[20px] tracking-[0px]">23:48<br />12/08/2024</div>
      <svg className="ml-[11px]" width="17" height="19" viewBox="0 0 17 19"><path d="M8.500 0c4 0 6 3 6 7v4.500l2.500 3v1H0v-1l2.500-3V7c0-4 2-7 6-7zM6 16.500h5c-.5 3-4.500 3-5 0z" fill="#8fe6ff" /></svg>
      <div className="relative ml-[20px] h-[31px] w-[31px]">
        <svg width="30" height="26" viewBox="0 0 30 26"><defs><linearGradient id="cp" x1="0" y1="0" x2="0" y2="1"><stop stopColor="#1a7de8" /><stop offset=".5" stopColor="#36c08a" /><stop offset="1" stopColor="#f5d020" /></linearGradient><linearGradient id="cq" x1="0" y1="0" x2="0" y2="1"><stop stopColor="#9a6cf0" /><stop offset=".6" stopColor="#f06ab0" /><stop offset="1" stopColor="#f5893c" /></linearGradient></defs><path d="M7 1h13l-7 21H3c-4-1-3-6-2-9z" fill="url(#cp)" /><path d="M17 8h9c4 1 3 5 2 8l-3 9H11z" fill="url(#cq)" /><path d="M14 1h5c2 0 3 4 4 7h-6c-2 0-3 3-3 3z" fill="#2a4fd8" /></svg>
        <div className="absolute bottom-0 left-[8px] flex h-[10px] w-[22px] items-center justify-center rounded-[2px] bg-[#ffc20e] text-[9px] font-bold leading-none tracking-[0.3px] text-black">PRE</div>
      </div>
    </div>
  </footer>
);

export default function App() {
  return (
    <div className="flex h-[1079px] w-[1919px] flex-col overflow-hidden bg-[#333] font-['Open_Sans','Noto_Sans',sans-serif]">
      <TitleBar />
      <MenuBar />
      <div className="flex h-[928px] pl-[3px]">
        <div className="flex pt-[3px]"><ProjectsPanel /></div>
        <main className="ml-[4px] flex w-[1600px] flex-col">
          <DocTabs />
          <div className="relative h-[867px] bg-[#6e6a69]">
            <Board />
            <ToolBar />
          </div>
          <LayerStrip />
        </main>
        <div className="ml-[3px] flex pt-[3px]"><SideTabs /></div>
      </div>
      <StatusBar />
      <TaskBar />
    </div>
  );
}
